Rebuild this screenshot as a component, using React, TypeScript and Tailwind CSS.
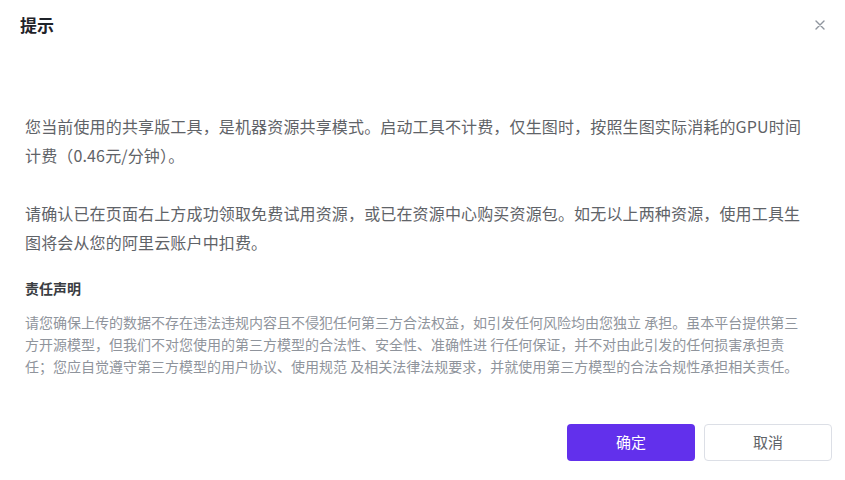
export default function App() {
  return (
    <div className="w-[845px] h-[480px] bg-white flex flex-col font-['Noto_Sans_CJK_SC','Noto_Sans',sans-serif]">
      <div className="h-[50px] flex items-center justify-between pl-[20px] pr-[19px]">
        <h1 className="text-[17px] font-bold text-[#1f2329]">提示</h1>
        <button className="w-[12px] h-[12px] flex items-center justify-center text-[#8f959e]">
          <svg width="10" height="10" viewBox="0 0 10 10" fill="none" stroke="currentColor" strokeWidth="1.4" strokeLinecap="round">
            <path d="M1 1L9 9M9 1L1 9" />
          </svg>
        </button>
      </div>

      <div className="pl-[25px] w-[812px] pt-[62px]">
        <p className="text-[16px] leading-[29px] tracking-[0.15px] text-[#5f6368]">
          您当前使用的共享版工具，是机器资源共享模式。启动工具不计费，仅生图时，按照生图实际消耗的GPU时间计费（0.46元/分钟）。
        </p>
        <p className="mt-[29px] text-[16px] leading-[29px] tracking-[0.15px] text-[#5f6368]">
          请确认已在页面右上方成功领取免费试用资源，或已在资源中心购买资源包。如无以上两种资源，使用工具生图将会从您的阿里云账户中扣费。
        </p>

        <h2 className="mt-[20px] text-[14px] leading-[22px] font-bold text-[#3a3d42]">责任声明</h2>
        <p className="mt-[12px] text-[14px] leading-[22px] text-[#8f949c]">
          请您确保上传的数据不存在违法违规内容且不侵犯任何第三方合法权益，如引发任何风险均由您独立 承担。虽本平台提供第三方开源模型，但我们不对您使用的第三方模型的合法性、安全性、准确性进 行任何保证，并不对由此引发的任何损害承担责任；您应自觉遵守第三方模型的用户协议、使用规范 及相关法律法规要求，并就使用第三方模型的合法合规性承担相关责任。
        </p>
      </div>

      <div className="mt-auto mb-[19px] flex justify-end gap-[9px] pr-[13px]">
        <button className="w-[128px] h-[37px] rounded-[4px] bg-[#6230ec] text-white text-[15px]">确定</button>
        <button className="w-[128px] h-[37px] rounded-[4px] border border-[#dcdfe6] bg-white text-[#5f6368] text-[15px]">取消</button>
      </div>
    </div>
  );
}
